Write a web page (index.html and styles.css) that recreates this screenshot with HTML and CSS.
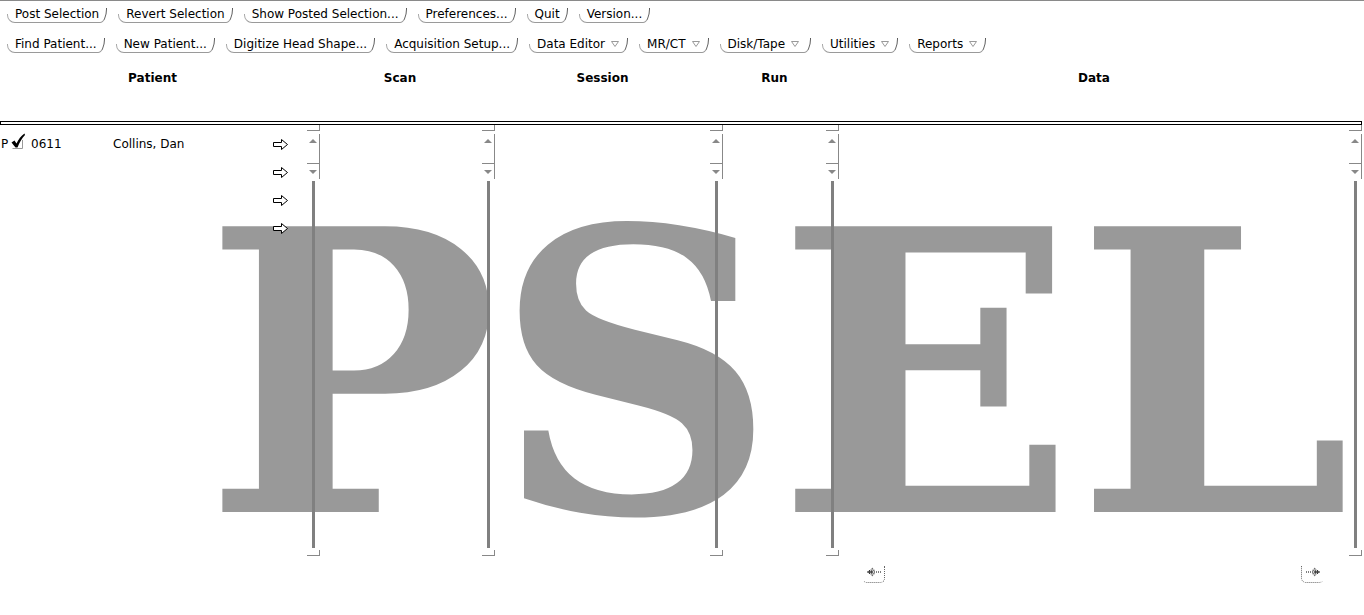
FILE: index.html
```html
<!DOCTYPE html>
<html>
<head>
<meta charset="utf-8">
<link rel="stylesheet" href="styles.css">
</head>
<body>
<div class="app">
  <div class="toolbar first">
    <span class="btn">Post Selection</span>
    <span class="btn">Revert Selection</span>
    <span class="btn">Show Posted Selection...</span>
    <span class="btn">Preferences...</span>
    <span class="btn">Quit</span>
    <span class="btn">Version...</span>
  </div>
  <div class="toolbar second">
    <span class="btn">Find Patient...</span>
    <span class="btn">New Patient...</span>
    <span class="btn">Digitize Head Shape...</span>
    <span class="btn">Acquisition Setup...</span>
    <span class="btn menu">Data Editor<svg class="tri" width="8" height="6" viewBox="0 0 8 6"><path d="M0.5 0.5 H7.5 L4 5.5 Z" fill="none" stroke="#999" stroke-width="1"/></svg></span>
    <span class="btn menu">MR/CT<svg class="tri" width="8" height="6" viewBox="0 0 8 6"><path d="M0.5 0.5 H7.5 L4 5.5 Z" fill="none" stroke="#999" stroke-width="1"/></svg></span>
    <span class="btn menu wide">Disk/Tape<svg class="tri" width="8" height="6" viewBox="0 0 8 6"><path d="M0.5 0.5 H7.5 L4 5.5 Z" fill="none" stroke="#999" stroke-width="1"/></svg></span>
    <span class="btn menu">Utilities<svg class="tri" width="8" height="6" viewBox="0 0 8 6"><path d="M0.5 0.5 H7.5 L4 5.5 Z" fill="none" stroke="#999" stroke-width="1"/></svg></span>
    <span class="btn menu">Reports<svg class="tri" width="8" height="6" viewBox="0 0 8 6"><path d="M0.5 0.5 H7.5 L4 5.5 Z" fill="none" stroke="#999" stroke-width="1"/></svg></span>
  </div>

  <div class="headers">
    <div class="hd">Patient</div>
    <div class="hd">Scan</div>
    <div class="hd">Session</div>
    <div class="hd">Run</div>
    <div class="hd">Data</div>
  </div>

  <div class="divider"></div>

  <div class="lists">
    <div class="pane">
      <div class="content patients">
        <div class="prow">
          <span class="flag">P</span>
          <svg class="check" width="14" height="16" viewBox="0 0 14 16">
            <path d="M1.5 15.5 H11.5 V7" fill="none" stroke="#999" stroke-width="1"/>
            <path d="M0.5 9.5 L3.5 7.5 L5.5 10.5 C7.5 6 10 3 13.5 0.5 L14 2 C11 5 8.5 9.5 6.5 14.5 L4.5 14.5 Z" fill="#000"/>
          </svg>
          <span class="pid">0611</span>
          <span class="pname">Collins, Dan</span>
          <svg class="arrow" width="16" height="11" viewBox="0 0 16 11"><path d="M0.5 3.5 H8.5 V0.5 L14.5 5.5 L8.5 10.5 V7.5 H0.5 Z" fill="#fff" stroke="#000" stroke-width="1"/></svg>
        </div>
        <div class="prow"><svg class="arrow" width="16" height="11" viewBox="0 0 16 11"><path d="M0.5 3.5 H8.5 V0.5 L14.5 5.5 L8.5 10.5 V7.5 H0.5 Z" fill="#fff" stroke="#000" stroke-width="1"/></svg></div>
        <div class="prow"><svg class="arrow" width="16" height="11" viewBox="0 0 16 11"><path d="M0.5 3.5 H8.5 V0.5 L14.5 5.5 L8.5 10.5 V7.5 H0.5 Z" fill="#fff" stroke="#000" stroke-width="1"/></svg></div>
        <div class="prow"><svg class="arrow" width="16" height="11" viewBox="0 0 16 11"><path d="M0.5 3.5 H8.5 V0.5 L14.5 5.5 L8.5 10.5 V7.5 H0.5 Z" fill="#fff" stroke="#000" stroke-width="1"/></svg></div>
      </div>
      <div class="sb">
        <div class="cap"></div>
        <div class="btns"><div class="up"><i class="tup"></i></div><div class="down"><i class="tdn"></i></div></div>
        <div class="track"></div>
        <div class="cap end"></div>
      </div>
    </div>
    <div class="pane">
      <div class="content"></div>
      <div class="sb">
        <div class="cap"></div>
        <div class="btns"><div class="up"><i class="tup"></i></div><div class="down"><i class="tdn"></i></div></div>
        <div class="track"></div>
        <div class="cap end"></div>
      </div>
    </div>
    <div class="pane">
      <div class="content"></div>
      <div class="sb">
        <div class="cap"></div>
        <div class="btns"><div class="up"><i class="tup"></i></div><div class="down"><i class="tdn"></i></div></div>
        <div class="track"></div>
        <div class="cap end"></div>
      </div>
    </div>
    <div class="pane">
      <div class="content"></div>
      <div class="sb">
        <div class="cap"></div>
        <div class="btns"><div class="up"><i class="tup"></i></div><div class="down"><i class="tdn"></i></div></div>
        <div class="track"></div>
        <div class="cap end"></div>
      </div>
    </div>
    <div class="pane">
      <div class="content"></div>
      <div class="sb">
        <div class="cap"></div>
        <div class="btns"><div class="up"><i class="tup"></i></div><div class="down"><i class="tdn"></i></div></div>
        <div class="track"></div>
        <div class="cap end"></div>
      </div>
    </div>
  </div>

  <div class="hbar">
    <div></div><div></div><div></div><div></div>
    <div class="hcell">
      <span class="hbtn left">
        <svg width="14" height="10" viewBox="0 0 14 10">
          <path d="M1 5 H14" fill="none" stroke="#000" stroke-width="1" stroke-dasharray="1 1"/>
          <path d="M0.5 5 L6 1 M0.5 5 L6 9 M2 5 L7 2 M2 5 L7 8 M4 5 L8 3 M4 5 L8 7" fill="none" stroke="#000" stroke-width="1" stroke-dasharray="1 1"/>
        </svg>
      </span>
      <span class="hbtn right">
        <svg width="14" height="10" viewBox="0 0 14 10">
          <path d="M0 5 H13" fill="none" stroke="#000" stroke-width="1" stroke-dasharray="1 1"/>
          <path d="M13.5 5 L8 1 M13.5 5 L8 9 M12 5 L7 2 M12 5 L7 8 M10 5 L6 3 M10 5 L6 7" fill="none" stroke="#000" stroke-width="1" stroke-dasharray="1 1"/>
        </svg>
      </span>
    </div>
  </div>

  <div class="watermark"><span class="wp">P</span>SEL</div>
</div>
</body>
</html>
```
FILE: styles.css
```css
html, body {
  margin: 0;
  padding: 0;
  background: #fff;
}
body {
  font-family: "DejaVu Sans", "Liberation Sans", sans-serif;
  font-size: 12px;
  color: #000;
}
.app {
  width: 1364px;
  height: 615px;
  border-top: 1px solid #8a8a8a;
  box-sizing: border-box;
  overflow: hidden;
}
.toolbar {
  display: flex;
  gap: 11px;
  padding-left: 7px;
  height: 18px;
}
.toolbar.first { margin-top: 4px; }
.toolbar.second { margin-top: 12px; }
.btn {
  position: relative;
  display: inline-flex;
  align-items: center;
  height: 17px;
  padding: 0 8px 1px 8px;
  line-height: 14px;
  white-space: nowrap;
}
.btn::before {
  content: "";
  position: absolute;
  left: 0;
  bottom: 0;
  width: 8px;
  height: 8px;
  border-left: 1px solid #a8a8a8;
  border-bottom: 1px solid #9a9a9a;
  border-bottom-left-radius: 8px 8px;
}
.btn::after {
  content: "";
  position: absolute;
  left: 9px;
  right: 0;
  bottom: 0;
  height: 14px;
  border-bottom: 1px solid #9a9a9a;
  border-right: 1px solid #5a5a5a;
  border-bottom-right-radius: 7px 14px;
}
.btn .tri {
  margin-left: 6px;
  margin-top: 1px;
}
.btn.menu {
  padding-right: 9px;
}
.btn.wide {
  padding-right: 12px;
}
.headers {
  display: grid;
  grid-template-columns: 305px 190px 215px 129px 510px 1fr;
  margin-top: 15px;
  height: 20px;
  line-height: 20px;
  font-weight: bold;
  text-align: center;
}
.divider {
  margin-top: 33px;
  height: 2px;
  width: 1360px;
  border: 1px solid #000;
}
.lists {
  display: grid;
  grid-template-columns: 320px 175px 228px 116px 523px;
  height: 431px;
}
.pane {
  display: flex;
  min-width: 0;
}
.content {
  flex: 1;
  min-width: 0;
}
.patients {
  padding-top: 5px;
}
.prow {
  display: flex;
  align-items: center;
  height: 28px;
  padding-right: 18px;
  position: relative;
  z-index: 1;
}
.prow .arrow {
  margin-left: auto;
  margin-top: 0;
}
.flag {
  margin-left: 1px;
  width: 10px;
}
.check {
  margin-top: -6px;
}
.pid {
  margin-left: 6px;
  width: 82px;
}
.pname {
  white-space: nowrap;
}
.sb {
  width: 13px;
  display: flex;
  flex-direction: column;
  position: relative;
  z-index: 1;
}
.cap {
  height: 5px;
  border-right: 1px solid #888;
  border-bottom: 1px solid #888;
}
.cap.end {
  margin-top: 2px;
}
.btns {
  margin-top: 3px;
  height: 45px;
  border-right: 1px solid #888;
  display: flex;
  flex-direction: column;
}
.up {
  height: 30px;
  border-bottom: 1px solid #888;
  padding-top: 5px;
  padding-left: 2px;
  box-sizing: border-box;
}
.down {
  flex: 1;
  padding-top: 6px;
  padding-left: 2px;
}
.tup, .tdn {
  display: block;
  width: 0;
  height: 0;
  border-left: 4px solid transparent;
  border-right: 4px solid transparent;
}
.tup { border-bottom: 4px solid #888; }
.tdn { border-top: 4px solid #888; }
.track {
  flex: 1;
  width: 3px;
  margin: 2px 0 0 5px;
  background: #808080;
}
.hbar {
  display: grid;
  grid-template-columns: 320px 175px 228px 116px 523px;
  margin-top: 10px;
}
.hcell {
  display: flex;
  justify-content: space-between;
  padding: 0 38px 0 23px;
}
.hbtn {
  width: 21px;
  height: 15px;
  display: flex;
  align-items: flex-start;
  justify-content: center;
  padding-top: 1px;
  border-bottom: 1px dotted #666;
  border-radius: 0 0 5px 5px;
}
.hbtn.left {
  border-right: 1px dotted #666;
  border-left: 1px solid transparent;
}
.hbtn.right {
  border-left: 1px dotted #666;
  border-right: 1px solid transparent;
}
.watermark {
  position: absolute;
  left: 204px;
  top: 178px;
  font-family: "DejaVu Serif", serif;
  font-weight: bold;
  font-size: 392px;
  line-height: 1;
  color: #999;
  z-index: 0;
  white-space: nowrap;
}
.wp {
  margin-right: -5px;
}
```
